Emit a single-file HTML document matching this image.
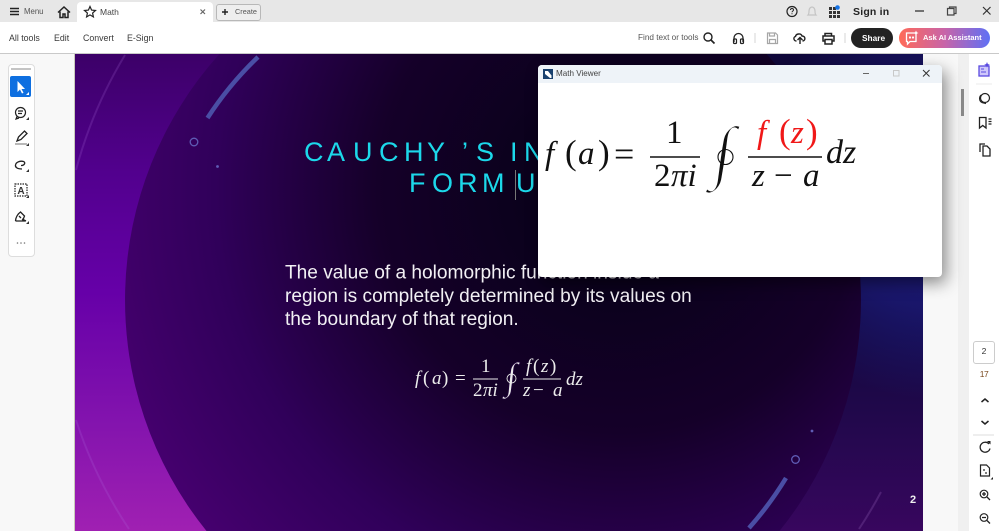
<!DOCTYPE html>
<html><head><meta charset="utf-8"><title>Math</title>
<style>
html,body{margin:0;padding:0;width:999px;height:531px;overflow:hidden;background:#fff;font-family:"Liberation Sans",sans-serif}
#root{position:absolute;left:0;top:0;width:999px;height:531px;overflow:hidden}
.a{position:absolute}
.t{position:absolute;white-space:nowrap;color:#3a3a3a;font-size:9px;line-height:12px}
svg{position:absolute;overflow:hidden}
</style></head><body><div id="root">
<!-- chrome backgrounds -->
<div class="a" style="left:0;top:0;width:999px;height:22px;background:#e7e7e7"></div>
<div class="a" style="left:0;top:22px;width:999px;height:31px;background:#fff;border-bottom:1px solid #c9c9c9"></div>
<div class="a" style="left:77px;top:2px;width:136px;height:20px;background:#fff;border-radius:4px 4px 0 0"></div>
<div class="a" style="left:216px;top:4px;width:43px;height:15px;border:1px solid #b8b8b8;border-radius:3px;background:#eee"></div>
<div class="a" style="left:0;top:54px;width:74px;height:477px;background:#f8f8f8;border-right:1px solid #c9cabb"></div>
<div class="a" style="left:923px;top:54px;width:46px;height:477px;background:#f8f8f8"></div>
<div class="a" style="left:958px;top:54px;width:11px;height:477px;background:#f0f0f0"></div>
<div class="a" style="left:969px;top:54px;width:30px;height:477px;background:#fff"></div>
<div class="a" style="left:961px;top:89px;width:3px;height:27px;background:#8a8a8a"></div>

<!-- top bar text -->
<div class="t" style="left:24px;top:6px;font-size:7.800px;color:#555">Menu</div>
<div class="t" style="left:100px;top:6px;font-size:8.500px;color:#444">Math</div>
<div class="t" style="left:235px;top:6px;font-size:7.300px;color:#555">Create</div>
<div class="t" style="left:853px;top:6px;font-size:10.500px;font-weight:bold;color:#222;letter-spacing:.2px">Sign in</div>
<div class="t" style="left:9px;top:32px;font-size:8.800px">All tools</div>
<div class="t" style="left:54px;top:32px;font-size:8.800px">Edit</div>
<div class="t" style="left:83px;top:32px;font-size:8.800px">Convert</div>
<div class="t" style="left:127px;top:32px;font-size:8.800px">E-Sign</div>
<div class="t" style="left:638px;top:32px;font-size:8.200px;color:#555">Find text or tools</div>
<div class="a" style="left:851px;top:28px;width:42px;height:20px;border-radius:10px;background:#222"></div>
<div class="t" style="left:862px;top:32px;font-size:8.300px;font-weight:bold;color:#fff">Share</div>
<div class="a" style="left:899px;top:28px;width:91px;height:20px;border-radius:10px;background:linear-gradient(90deg,#ff6a58,#c864a8 50%,#5f70f5)"></div>
<div class="t" style="left:923px;top:32px;font-size:7.500px;font-weight:bold;color:#fff">Ask AI Assistant</div>

<!-- chrome icons -->
<svg style="left:0;top:0" width="999" height="54" viewBox="0 0 999 54">
<g fill="none" stroke="#222" stroke-width="1.200">
<path stroke-width="1.500" d="M10 8.500h9M10 11.500h9M10 14.500h9"/>
<path stroke-width="1.500" d="M58 12.500L64 7l6 5.500M60 11.500v6h3v-3.500h2v3.500h3v-6"/>
<path d="M90 6.500l1.600 3.600 3.900.4-2.900 2.600.8 3.800-3.400-2-3.400 2 .8-3.800-2.900-2.600 3.900-.4z"/>
<path stroke="#666" d="M200.500 9.500l4.500 4.500M205 9.500l-4.500 4.500"/>
<path stroke-width="1.400" d="M225 9v6M222 12h6"/>
<circle cx="792" cy="11.500" r="5"/><path stroke-width="1" d="M790.500 10c0-2 3-2 3 0 0 1-1.500 1-1.500 2.300M792 13.300v1"/>
<path stroke="#c4c4c4" d="M808 15c1-1 1-2 1-4 0-2.500 1.500-4 3-4s3 1.500 3 4c0 2 0 3 1 4z"/>
<path stroke="#333" stroke-width="1.300" d="M915 11h9"/>
<path stroke="#444" d="M947.500 8.500h6.500v6.500h-6.500zM949.500 8.500v-1.500h6.500v6.500h-2"/>
<path stroke="#333" d="M983 7l7.500 7.500M990.500 7l-7.500 7.500"/>
<circle stroke-width="1.400" cx="708" cy="37" r="4"/><path stroke-width="1.700" d="M711 40l3.500 3.500"/>
<path stroke-width="1.300" d="M734 42v-4a4.500 4.500 0 0 1 9 0v4"/><rect x="733.500" y="39" width="3" height="4.500" rx="1"/><rect x="740.500" y="39" width="3" height="4.500" rx="1"/>
<path stroke="#ddd" d="M755 33v10M845 33v10"/>
<path stroke="#a6a6a6" d="M767.500 33h8l2 2v8.500h-10zM769.500 33v3h5v-3M769.500 43.500v-4h6v4"/>
<path stroke-width="1.400" d="M796.500 41c-3 0-3.500-4-1-4.500 .5-3 5.500-3.500 6.500-.5 3.500 0 4 4.500 .5 5M800 44v-6.500M797.500 40l2.500-2.500 2.500 2.500"/>
<path stroke-width="1.500" d="M825 36v-2.500h6.500v2.500M825 41h-2v-5h11v5h-2M825 39.500h7v4.500h-7z"/>
<path stroke="#fff" stroke-width="1.300" d="M906.500 33h9.500v8.500h-6l-2.500 2.500v-2.500h-1z"/>
</g>
<g fill="#333"><rect x="829" y="7" width="3" height="3"/><rect x="833" y="7" width="3" height="3"/><rect x="829" y="11" width="3" height="3"/><rect x="833" y="11" width="3" height="3"/><rect x="837" y="11" width="3" height="3"/><rect x="829" y="15" width="3" height="3"/><rect x="833" y="15" width="3" height="3"/><rect x="837" y="15" width="3" height="3"/></g>
<circle cx="837.500" cy="7.500" r="2.300" fill="#1473e6"/>
<path d="M916 30.500l.8 1.700 1.700.8-1.700.8-.8 1.700-.8-1.700-1.700-.8 1.700-.8z" fill="#fff"/><circle cx="910" cy="37.500" r="1.100" fill="#fff"/><circle cx="913" cy="37.500" r="1.100" fill="#fff"/>
</svg>

<!-- slide -->
<svg style="left:75px;top:54px" width="848" height="477" viewBox="75 54 848 477" font-family="'Liberation Serif',serif">
<defs>
<linearGradient id="g0" gradientUnits="userSpaceOnUse" x1="75" y1="54" x2="75" y2="531">
<stop offset="0" stop-color="#3c0068"/><stop offset=".25" stop-color="#52008e"/><stop offset=".5" stop-color="#6600a8"/><stop offset=".78" stop-color="#8414ae"/><stop offset="1" stop-color="#a020b2"/></linearGradient>
<radialGradient id="g1" gradientUnits="userSpaceOnUse" cx="620" cy="190" r="540">
<stop offset="0" stop-color="#040214"/><stop offset=".45" stop-color="#150029"/><stop offset=".75" stop-color="#30005a"/><stop offset="1" stop-color="#46006f"/></radialGradient>
<radialGradient id="g2" gradientUnits="userSpaceOnUse" cx="935" cy="200" r="200">
<stop offset="0" stop-color="#1e1e88"/><stop offset=".55" stop-color="#1c1a78" stop-opacity=".75"/><stop offset="1" stop-color="#1c1a78" stop-opacity="0"/></radialGradient>
<linearGradient id="g3" gradientUnits="userSpaceOnUse" x1="0" y1="300" x2="0" y2="531">
<stop offset="0" stop-color="#2d0a5c" stop-opacity="0"/><stop offset="1" stop-color="#38065e"/></linearGradient>
</defs>
<rect x="75" y="54" width="848" height="477" fill="url(#g0)"/>
<rect x="500" y="54" width="423" height="477" fill="#10083a"/>
<rect x="500" y="54" width="423" height="477" fill="url(#g3)"/>
<rect x="700" y="54" width="223" height="477" fill="url(#g2)"/>
<path d="M219.400 54A368 368 0 0 0 206.500 531H779.500A368 368 0 0 0 766.600 54Z" fill="url(#g1)"/>
<path d="M125 55A440 440 0 0 0 76 170M76 420A440 440 0 0 0 129 529" fill="none" stroke="#b070e0" stroke-opacity=".2" stroke-width="2"/>
<path d="M207.500 118A339 339 0 0 1 258 57" fill="none" stroke="#4a4ea5" stroke-width="4.500"/>
<path d="M786 478A343 343 0 0 1 749 528" fill="none" stroke="#4a4ea5" stroke-width="4.500"/>
<path d="M881 492A433 433 0 0 1 859 529" fill="none" stroke="#6a3a90" stroke-opacity=".5" stroke-width="2"/>
<circle cx="194" cy="142" r="3.800" fill="none" stroke="#5f5cb5" stroke-width="1.300"/>
<circle cx="217.500" cy="166.500" r="1.400" fill="#5f5cb5"/>
<circle cx="795.500" cy="459.500" r="3.800" fill="none" stroke="#5f5cb5" stroke-width="1.300"/>
<circle cx="812" cy="431" r="1.400" fill="#5f5cb5"/>
<g font-family="'Liberation Sans',sans-serif" fill="#1cd8ea" font-size="27">
<text x="304 327 353 379 404 427 462 476 510 524" y="161">CAUCHY’SIN</text>
<text x="409 432 458 482 516" y="192">FORMU</text>
</g>
<line x1="515.500" y1="170" x2="515.500" y2="200" stroke="#777"/>
<g font-family="'Liberation Sans',sans-serif" fill="#f2f0f4" font-size="19.130">
<text x="285" y="278.500">The value of a holomorphic function inside a</text>
<text x="285" y="302">region is completely determined by its values on</text>
<text x="285" y="325">the boundary of that region.</text>
</g>
<text x="913" y="503" font-family="'Liberation Sans',sans-serif" font-size="11" font-weight="bold" fill="#f0f0f0" text-anchor="middle">2</text>
<g fill="#ececec" font-size="19">
<text x="415" y="384" font-style="italic">f</text><text x="423" y="384">(</text><text x="432" y="384" font-style="italic">a</text><text x="442" y="384">)</text>
<text x="455" y="384" font-size="19">=</text>
<text x="481" y="372">1</text>
<text x="473" y="396">2</text><text x="483" y="396" font-style="italic">πi</text>
<text x="526" y="372" font-style="italic">f</text><text x="533" y="372">(</text><text x="541" y="372" font-style="italic">z</text><text x="550" y="372">)</text>
<text x="523" y="396" font-style="italic">z</text><text x="533" y="396">−</text><text x="553" y="396" font-style="italic">a</text>
<text x="566" y="385" font-style="italic">dz</text>
</g>
<text x="0" y="0" font-size="38" fill="#ececec" stroke="#1c0036" stroke-width=".9" transform="translate(505 389) skewX(-6)">∫</text>
<circle cx="511.500" cy="378.500" r="4.500" fill="none" stroke="#ececec" stroke-width=".9"/>
<path d="M473 379h25M523 379h38" stroke="#ececec" stroke-width="1"/>
</svg>

<!-- left tool panel -->
<div class="a" style="left:8px;top:64px;width:25px;height:191px;background:#fff;border:1px solid #ddd;border-radius:4px"></div>
<div class="a" style="left:11px;top:68px;width:20px;height:2px;background:#c4c4c4"></div>
<div class="a" style="left:10px;top:76px;width:21px;height:21px;background:#0e6fe0;border-radius:2px"></div>
<svg style="left:0;top:54px" width="40" height="210" viewBox="0 54 40 210">
<path d="M17.500 81v11l2.500-2.500 2 4 1.500-.7-2-3.800h3.500z" fill="#fff"/>
<path d="M29 92v3h-3z" fill="#fff"/>
<g fill="none" stroke="#222" stroke-width="1.200">
<circle cx="20.500" cy="112.500" r="5"/><path d="M18 111h5M18 113.500h4M17 116.500l-1 2.500 3-1"/>
<path stroke-width="1.300" d="M17 141l1.500-4 6-6 2.500 2.500-6 6z"/><path stroke="#888" d="M15 144h12"/>
<path stroke-width="1.300" d="M22 169c-5 0-7-2-6.500-4 .5-3 5-4.500 8-3.500 2.500 1 1 4-2.500 4"/>
<rect x="15" y="184" width="12" height="12" stroke-dasharray="1.500 1"/>
<path stroke-width="1.300" d="M15.500 221c0-3 2-7 5-9l4 4-2 5M15.500 221h10M19 216l2 2M22 219l4 2"/>
</g>
<text x="21" y="194" font-size="10" font-weight="bold" font-family="'Liberation Sans',sans-serif" fill="#333" text-anchor="middle">A</text>
<g fill="#333"><path d="M29 117v3h-3zM29 143v3h-3zM29 169v3h-3zM29 195v3h-3zM29 221v3h-3z"/></g>
<g fill="#777"><circle cx="17.500" cy="243" r=".8"/><circle cx="21" cy="243" r=".8"/><circle cx="24.500" cy="243" r=".8"/></g>
</svg>

<!-- right rail -->
<div class="a" style="left:973px;top:341px;width:20px;height:21px;background:#fff;border:1px solid #ccc;border-radius:3px"></div>
<div class="t" style="left:973px;top:345px;width:22px;text-align:center;font-size:8.500px;color:#333">2</div>
<div class="t" style="left:973px;top:368px;width:22px;text-align:center;font-size:8.500px;color:#7a4a20;letter-spacing:-.5px">17</div>
<svg style="left:969px;top:54px" width="30" height="477" viewBox="969 54 30 477">
<rect x="979" y="66" width="10" height="10" fill="#cfc8fa" stroke="#5a4ae0" stroke-width="1.300"/><path d="M981 69h3M981 72h5" stroke="#5a4ae0"/><path d="M987 62l.8 2 2 .8-2 .8-.8 2-.8-2-2-.8 2-.8z" fill="#5a4ae0"/>
<g fill="none" stroke="#222" stroke-width="1.200">
<path stroke="#eee" d="M976 84h16"/>
<circle cx="985" cy="98" r="4.500"/><path d="M981 95c-2 2-2 6 1 7.500l4 1"/>
<path stroke-width="1.300" d="M979.500 117.500h6.500v10.500l-3.250-2.500-3.250 2.500zM988.500 119h3M988.500 121.500h3M988.500 124h3"/>
<path stroke-width="1.300" d="M980 152v-8h5M983 146h4l3 3v7h-7z"/>
<path stroke-width="1.500" d="M981.500 402l3.500-3 3.500 3M981.500 421l3.500 3 3.500-3"/>
<path stroke="#e3e3e3" d="M973 435h21"/>
<path stroke-width="1.300" d="M989 444a5 5 0 1 0 1 4.500"/>
<path d="M980.500 465h6l3 3v8h-9z"/>
<circle cx="984" cy="494" r="3.800"/><path stroke-width="1.300" d="M987 497l3 3M982 494h4M984 492v4"/>
<circle cx="984" cy="517.500" r="3.800"/><path stroke-width="1.300" d="M987 520.500l3 3M982 517.500h4"/>
</g>
<path d="M987 441l3.500 0v3.500z" fill="#222"/>
<circle cx="984" cy="470" r=".9" fill="#222"/><circle cx="986" cy="473" r=".9" fill="#222"/><path d="M993 477v2.500h-2.500z" fill="#222"/>
</svg>

<!-- math window -->
<div class="a" style="left:538px;top:65px;width:404px;height:212px;background:#fff;border-radius:4px;box-shadow:4px 6px 16px rgba(0,0,0,.45);overflow:hidden">
<div class="a" style="left:0;top:0;width:404px;height:18px;background:#eef3f8"></div>
</div>
<div class="t" style="left:556px;top:68px;font-size:8.100px;color:#444">Math Viewer</div>
<svg style="left:538px;top:65px" width="404" height="212" viewBox="538 65 404 212" font-family="'Liberation Serif',serif">
<rect x="543" y="69" width="10" height="10" fill="#18406e"/><path d="M545 71h3l3.500 4.500V78h-1.500L545 74z" fill="#fff"/>
<path d="M863 73.500h6" stroke="#666"/><rect x="893.500" y="70.500" width="5.500" height="5.500" fill="none" stroke="#c8c8c8"/>
<path d="M923 70l6.500 6.500M929.500 70l-6.500 6.500" stroke="#333" stroke-width="1"/>
<g fill="#111" font-size="33">
<text x="545" y="164" font-style="italic">f</text><text x="565" y="164" font-size="35">(</text><text x="578" y="164" font-style="italic">a</text><text x="598" y="164" font-size="35">)</text>
<text x="614" y="166" font-size="36">=</text>
<text x="666" y="143">1</text>
<text x="654" y="186">2</text><text x="671" y="186" font-style="italic">πi</text>
<text x="752" y="186" font-style="italic">z</text><text x="774" y="186">−</text><text x="803" y="186" font-style="italic">a</text>
<text x="826" y="163" font-size="34" font-style="italic">dz</text>
</g>
<text x="0" y="0" font-size="70" fill="#111" stroke="#fff" stroke-width="2.200" transform="translate(711 175) skewX(-8)">∫</text>
<circle cx="725.500" cy="157" r="7.500" fill="none" stroke="#111" stroke-width="1.100"/>
<g fill="#f01818" font-size="33">
<text x="757" y="143" font-style="italic">f</text><text x="779" y="143" font-size="35">(</text><text x="791" y="143" font-style="italic">z</text><text x="806" y="143" font-size="35">)</text>
</g>
<path d="M650 157h50M748 157h74" stroke="#111" stroke-width="1.600"/>
</svg>
</div></body></html>
